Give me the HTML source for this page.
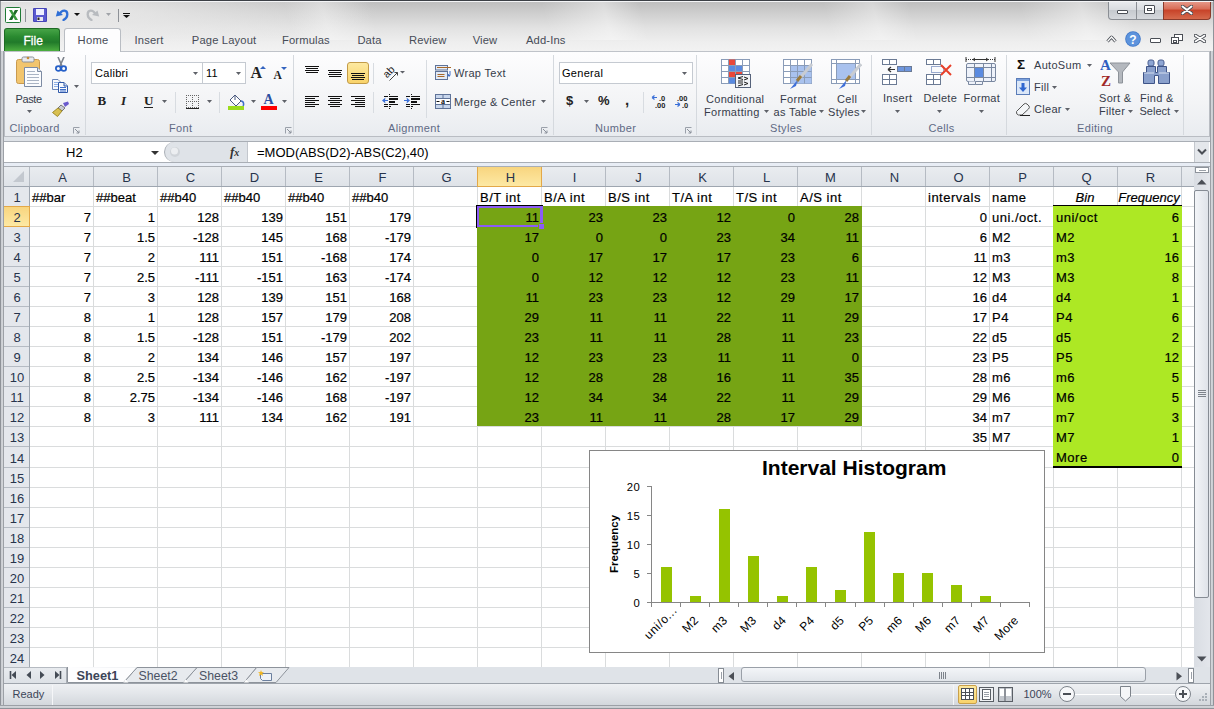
<!DOCTYPE html><html><head><meta charset='utf-8'><style>
*{box-sizing:border-box}
html,body{margin:0;padding:0}
body{width:1214px;height:709px;overflow:hidden;position:relative;background:#fff;font-family:"Liberation Sans", sans-serif;}
.a{position:absolute}
.t{position:absolute;white-space:nowrap;line-height:1}
.c{position:absolute;white-space:nowrap;font-size:13px;line-height:20px;height:20px;color:#000;-webkit-text-stroke:0.2px #000;}
.r{text-align:right}
.gl{position:absolute;font-size:11px;letter-spacing:0.35px;color:#5f6a85;line-height:1;white-space:nowrap}
</style></head><body><div class="a" style="left:0;top:0;width:1214px;height:167px;background:linear-gradient(#bdbdbd 1px,#cdcdcd 12px,#e2e2e2 28px,#eeeeee 42px,#f2f2f2 51px,#dfe3e8 51px,#dfe3e8 167px)"></div>
<div class="a" style="left:0;top:0;width:1214px;height:51px;background:radial-gradient(ellipse 320px 40px at 60px 10px,rgba(240,240,240,0.85),rgba(240,240,240,0) 100%)"></div>
<div class="a" style="left:0;top:0;width:1214px;height:40px;background:linear-gradient(75deg,rgba(255,255,255,0) 24%,rgba(255,255,255,0.35) 27%,rgba(255,255,255,0) 31%,rgba(255,255,255,0) 45%,rgba(255,255,255,0.4) 50%,rgba(255,255,255,0) 53%,rgba(255,255,255,0) 68%,rgba(255,255,255,0.35) 72%,rgba(255,255,255,0) 75%,rgba(255,255,255,0) 84%,rgba(255,255,255,0.4) 89%,rgba(255,255,255,0) 93%)"></div>
<div class="a" style="left:0;top:0;width:1214px;height:1px;background:#474b50"></div>
<div class="a" style="left:0;top:0;width:1px;height:709px;background:#6d7177"></div>
<div class="a" style="left:1213px;top:0;width:1px;height:709px;background:#6d7177"></div>
<div class="a" style="left:4px;top:51px;width:1206px;height:86px;background:linear-gradient(#fdfdfe,#f3f4f6 60%,#e9ecf0);border:1px solid #b9bdc3;border-top-color:#bfc3c9"></div>
<div class="a" style="left:64px;top:28px;width:57px;height:24px;background:#fdfdfe;border:1px solid #b9bdc3;border-bottom:none;border-radius:3px 3px 0 0"></div>
<div class="t" style="left:77.5px;top:34.5px;font-size:11.2px;letter-spacing:0.3px;color:#474c57">Home</div>
<div class="a" style="left:4px;top:28px;width:56px;height:23px;background:linear-gradient(#47a447,#2a8a30 35%,#217a2a 60%,#4cae3f);border-radius:3px 3px 0 0;border:1px solid #1e6b25;border-bottom:none"></div>
<div class="t" style="left:23.5px;top:34.5px;font-size:12px;color:#fff;-webkit-text-stroke:0.3px #fff">File</div>
<div class="t" style="left:134.6px;top:34.5px;font-size:11.2px;letter-spacing:0.15px;color:#474c57">Insert</div>
<div class="t" style="left:191.8px;top:34.5px;font-size:11.2px;letter-spacing:0.15px;color:#474c57">Page Layout</div>
<div class="t" style="left:282px;top:34.5px;font-size:11.2px;letter-spacing:0.15px;color:#474c57">Formulas</div>
<div class="t" style="left:357.4px;top:34.5px;font-size:11.2px;letter-spacing:0.15px;color:#474c57">Data</div>
<div class="t" style="left:409px;top:34.5px;font-size:11.2px;letter-spacing:0.15px;color:#474c57">Review</div>
<div class="t" style="left:472.7px;top:34.5px;font-size:11.2px;letter-spacing:0.15px;color:#474c57">View</div>
<div class="t" style="left:526px;top:34.5px;font-size:11.2px;letter-spacing:0.15px;color:#474c57">Add-Ins</div>
<div class="a" style="left:85px;top:55px;width:1px;height:80px;background:#d5d9de"></div>
<div class="a" style="left:293px;top:55px;width:1px;height:80px;background:#d5d9de"></div>
<div class="a" style="left:553px;top:55px;width:1px;height:80px;background:#d5d9de"></div>
<div class="a" style="left:696px;top:55px;width:1px;height:80px;background:#d5d9de"></div>
<div class="a" style="left:871px;top:55px;width:1px;height:80px;background:#d5d9de"></div>
<div class="a" style="left:1006px;top:55px;width:1px;height:80px;background:#d5d9de"></div>
<div class="a" style="left:1183px;top:55px;width:1px;height:80px;background:#d5d9de"></div>
<div class="gl" style="left:9.5px;top:123.2px">Clipboard</div>
<div class="gl" style="left:169px;top:123.2px">Font</div>
<div class="gl" style="left:388px;top:123.2px">Alignment</div>
<div class="gl" style="left:595px;top:123.2px">Number</div>
<div class="gl" style="left:770px;top:123.2px">Styles</div>
<div class="gl" style="left:928.5px;top:123.2px">Cells</div>
<div class="gl" style="left:1077px;top:123.2px">Editing</div>
<svg class="a" style="left:5px;top:7px;" width="17" height="17" viewBox="0 0 17 17"><rect x="0.5" y="0.5" width="15" height="15" rx="1" fill="#fff" stroke="#1f7a36"/><path d="M4 3h3l1.5 3 1.5-3h3l-3 5 3 5h-3L8.5 10 7 13H4l3-5z" fill="#3a9a3c"/><path d="M8.5 6L10 3h3l-3 5z" fill="#236b2b"/><path d="M4 13l3-5 1.5 2L7 13z" fill="#1d6b2a"/></svg>
<div class="a" style="left:25px;top:9px;width:1px;height:13px;background:#8d9197"></div>
<svg class="a" style="left:33px;top:8px;" width="14" height="14" viewBox="0 0 14 14"><rect x="0" y="0" width="14" height="14" rx="1" fill="#4646b8"/><rect x="1" y="1" width="12" height="12" fill="#5a5ad0"/><rect x="3" y="1" width="8" height="6" fill="#eef0ff"/><rect x="4" y="9" width="6" height="4" fill="#e8e8f0"/><rect x="4.5" y="9.5" width="2" height="2.5" fill="#222"/></svg>
<svg class="a" style="left:55px;top:7px;" width="14" height="14" viewBox="0 0 14 14"><path d="M5 6.5 C7 2.5 12.5 2.5 12.3 7.5 C12.2 10.5 10.5 12 8.5 13" fill="none" stroke="#2f6fd6" stroke-width="2.3" stroke-linecap="round"/><path d="M0.8 9.5 L2.5 3.5 L8 8z" fill="#2f6fd6"/></svg>
<svg class="a" style="left:73.5px;top:13px;" width="6" height="3" viewBox="0 0 6 3"><path d="M0 0H6L3.0 3Z" fill="#111"/></svg>
<svg class="a" style="left:86px;top:7px;" width="14" height="14" viewBox="0 0 14 14"><path d="M9 6.5 C7 2.5 1.5 2.5 1.7 7.5 C1.8 10.5 3.5 12 5.5 13" fill="none" stroke="#b8bbbf" stroke-width="2.3" stroke-linecap="round"/><path d="M13.2 9.5 L11.5 3.5 L6 8z" fill="#b8bbbf"/></svg>
<svg class="a" style="left:106px;top:13px;" width="5" height="3" viewBox="0 0 5 3"><path d="M0 0H5L2.5 3Z" fill="#a0a3a8"/></svg>
<div class="a" style="left:118px;top:9px;width:1px;height:13px;background:#8d9197"></div>
<div class="a" style="left:123px;top:13px;width:7px;height:1px;background:#111"></div>
<svg class="a" style="left:123px;top:15px;" width="7" height="3" viewBox="0 0 7 3"><path d="M0 0H7L3.5 3Z" fill="#111"/></svg>
<div class="a" style="left:1108px;top:0px;width:56px;height:20px;background:linear-gradient(#eceef1,#d9dce0 50%,#c5c9ce 52%,#d5d8dc);border:1px solid #8a8e94;border-top:none;border-radius:0 0 0 4px"></div>
<div class="a" style="left:1136px;top:0px;width:1px;height:19px;background:#8a8e94"></div>
<div class="a" style="left:1163px;top:0px;width:48px;height:20px;background:linear-gradient(#e9a496,#d9705a 45%,#c8442a 55%,#d56a4c);border:1px solid #8a3a2a;border-top:none;border-radius:0 0 4px 0"></div>
<div class="a" style="left:1117px;top:10px;width:11px;height:4px;border:1px solid #4a4e55;background:#fff;border-radius:1px"></div>
<div class="a" style="left:1144px;top:5px;width:11px;height:9px;border:1px solid #4a4e55;background:#fff;border-radius:1px"><div style="position:absolute;left:2px;top:2px;width:5px;height:3px;border:1px solid #4a4e55"></div></div>
<svg class="a" style="left:1181px;top:5px;" width="12" height="10" viewBox="0 0 12 10"><path d="M1.5 1.5 L10.5 8.5 M10.5 1.5 L1.5 8.5" stroke="#4a4e55" stroke-width="3.6" stroke-linecap="round"/><path d="M1.5 1.5 L10.5 8.5 M10.5 1.5 L1.5 8.5" stroke="#fff" stroke-width="2" stroke-linecap="round"/></svg>
<svg class="a" style="left:1106px;top:35px;" width="11" height="8" viewBox="0 0 11 8"><path d="M1.5 6.5 L5.5 2 L9.5 6.5" fill="none" stroke="#4a4e55" stroke-width="3" stroke-linejoin="round"/><path d="M1.5 6.5 L5.5 2 L9.5 6.5" fill="none" stroke="#fff" stroke-width="1.2"/></svg>
<svg class="a" style="left:1125px;top:31px;" width="16" height="16" viewBox="0 0 16 16"><circle cx="8" cy="8" r="7.8" fill="#3f77c8"/><circle cx="8" cy="8" r="7" fill="#5d93dc"/><text x="8" y="12.6" font-family="Liberation Sans" font-weight="bold" font-size="12" fill="#fff" text-anchor="middle">?</text></svg>
<div class="a" style="left:1150px;top:38px;width:11px;height:5px;border:1px solid #4a4e55;background:#fff;border-radius:1px"></div>
<div class="a" style="left:1174px;top:34px;width:9px;height:7px;border:1px solid #4a4e55;background:#fff"></div>
<div class="a" style="left:1171px;top:37px;width:8px;height:7px;border:1px solid #4a4e55;background:#fff"><div style="position:absolute;left:1px;top:2px;width:4px;height:3px;border:1px solid #4a4e55"></div></div>
<svg class="a" style="left:1194px;top:34px;" width="12" height="9" viewBox="0 0 12 9"><path d="M1.5 1.5 L10.5 7.5 M10.5 1.5 L1.5 7.5" stroke="#4a4e55" stroke-width="3.4" stroke-linecap="round"/><path d="M1.5 1.5 L10.5 7.5 M10.5 1.5 L1.5 7.5" stroke="#fff" stroke-width="1.6" stroke-linecap="round"/></svg>
<svg class="a" style="left:15px;top:56px;" width="28" height="32" viewBox="0 0 28 32"><rect x="1.5" y="3.5" width="23" height="24" rx="2" fill="#f2c56e" stroke="#c99a4f"/><rect x="7" y="1" width="12" height="5" rx="1.5" fill="#e8eaee" stroke="#8b9099"/><circle cx="13" cy="2" r="1.3" fill="#c58b3a"/><path d="M9.5 11.5 H22.5 L26.5 15.5 V30.5 H9.5Z" fill="#fbfcfe" stroke="#7d8ba3"/><path d="M22.5 11.5V15.5H26.5" fill="#dfe6f0" stroke="#7d8ba3"/><path d="M12 15.5H20M12 18.5H24M12 21.5H24M12 24.5H24M12 27.5H24" stroke="#aab4c4"/></svg>
<div class="t" style="left:15.5px;top:93.5px;font-size:11px;color:#363c4a;letter-spacing:0.3px;letter-spacing:-0.4px">Paste</div>
<svg class="a" style="left:27px;top:110px;" width="5" height="3" viewBox="0 0 5 3"><path d="M0 0H5L2.5 3Z" fill="#5e6168"/></svg>
<svg class="a" style="left:55px;top:57px;" width="12" height="15" viewBox="0 0 12 15"><path d="M3 0 L7 9 M9 0 L5 9" stroke="#7d838c" stroke-width="1.6"/><circle cx="3.3" cy="11.5" r="2.4" fill="none" stroke="#2660c8" stroke-width="1.8"/><circle cx="8.7" cy="11.5" r="2.4" fill="none" stroke="#2660c8" stroke-width="1.8"/></svg>
<svg class="a" style="left:52px;top:79px;" width="17" height="14" viewBox="0 0 17 14"><path d="M0.5 0.5H6L9.5 4V10.5H0.5Z" fill="#f7f9fc" stroke="#6a86b8"/><path d="M2 3.5H6M2 5.5H8M2 7.5H8" stroke="#8fb0e6"/><path d="M6.5 3.5H12L15.5 7V13.5H6.5Z" fill="#f7f9fc" stroke="#2f58a8"/><path d="M12 3.5V7H15.5" fill="#cfdcf2" stroke="#2f58a8"/><path d="M8 8.5H14M8 10.5H14M8 12H14" stroke="#3f6fc9"/></svg>
<svg class="a" style="left:74px;top:85px;" width="5" height="3" viewBox="0 0 5 3"><path d="M0 0H5L2.5 3Z" fill="#5e6168"/></svg>
<svg class="a" style="left:52px;top:101px;" width="18" height="16" viewBox="0 0 18 16"><path d="M11 2 L16 0.5 L17 3 L13 6z" fill="#6a5acd"/><path d="M9 4 L13 7 L10 10 L6 7z" fill="#c9ccd2" stroke="#777"/><path d="M6 7 L10 10 L5.5 15.5 L0.5 11.5z" fill="#d9c050" stroke="#9f8a2a"/></svg>
<svg class="a" style="left:73px;top:127px;" width="7" height="7" viewBox="0 0 7 7"><path d="M0.5 6.5V0.5H6.5" fill="none" stroke="#9aa0aa"/><path d="M2 2L6 6M6 3.5V6H3.5" fill="none" stroke="#8a909a"/></svg>
<div class="a" style="left:91px;top:62px;width:155px;height:22px;background:#fff;border:1px solid #c5cad1"></div>
<div class="a" style="left:202px;top:63px;width:1px;height:20px;background:#c5cad1"></div>
<div class="t" style="left:95px;top:67.9px;font-size:11px;color:#000;letter-spacing:0.3px;">Calibri</div>
<div class="t" style="left:206px;top:67.9px;font-size:11px;color:#000;letter-spacing:0.3px;">11</div>
<svg class="a" style="left:193px;top:72px;" width="5" height="3" viewBox="0 0 5 3"><path d="M0 0H5L2.5 3Z" fill="#5e6168"/></svg>
<svg class="a" style="left:236px;top:72px;" width="5" height="3" viewBox="0 0 5 3"><path d="M0 0H5L2.5 3Z" fill="#5e6168"/></svg>
<div class="t" style="left:250.5px;top:65px;font-size:16px;color:#222;font-family:Liberation Serif;font-weight:bold;">A</div>
<svg class="a" style="left:260px;top:66px;" width="6" height="3" viewBox="0 0 6 3"><path d="M0 3H6L3 0Z" fill="#3464c0"/></svg>
<div class="t" style="left:273.5px;top:70px;font-size:11.5px;color:#222;font-family:Liberation Serif;font-weight:bold;">A</div>
<svg class="a" style="left:281px;top:67px;" width="6" height="3" viewBox="0 0 6 3"><path d="M0 0H6L3 3Z" fill="#3464c0"/></svg>
<div class="t" style="left:97.5px;top:94px;font-size:13px;color:#222;font-family:Liberation Serif;font-weight:bold">B</div>
<div class="t" style="left:121px;top:94px;font-size:13px;color:#222;font-family:Liberation Serif;font-style:italic;font-weight:bold">I</div>
<div class="t" style="left:144px;top:94px;font-size:13px;color:#222;font-family:Liberation Serif;font-weight:bold">U</div>
<div class="a" style="left:144px;top:107px;width:9px;height:1px;background:#222"></div>
<svg class="a" style="left:162px;top:100px;" width="5" height="3" viewBox="0 0 5 3"><path d="M0 0H5L2.5 3Z" fill="#5e6168"/></svg>
<div class="a" style="left:175px;top:92px;width:1px;height:21px;background:#d8dce1"></div>
<svg class="a" style="left:186px;top:95px;" width="13" height="15" viewBox="0 0 13 15"><rect x="0" y="0" width="1" height="1" fill="#666"/><rect x="0" y="2" width="1" height="1" fill="#666"/><rect x="0" y="4" width="1" height="1" fill="#666"/><rect x="0" y="6" width="1" height="1" fill="#666"/><rect x="0" y="8" width="1" height="1" fill="#666"/><rect x="0" y="10" width="1" height="1" fill="#666"/><rect x="0" y="12" width="1" height="1" fill="#666"/><rect x="2" y="0" width="1" height="1" fill="#666"/><rect x="2" y="6" width="1" height="1" fill="#666"/><rect x="2" y="12" width="1" height="1" fill="#666"/><rect x="4" y="0" width="1" height="1" fill="#666"/><rect x="4" y="6" width="1" height="1" fill="#666"/><rect x="4" y="12" width="1" height="1" fill="#666"/><rect x="6" y="0" width="1" height="1" fill="#666"/><rect x="6" y="2" width="1" height="1" fill="#666"/><rect x="6" y="4" width="1" height="1" fill="#666"/><rect x="6" y="6" width="1" height="1" fill="#666"/><rect x="6" y="8" width="1" height="1" fill="#666"/><rect x="6" y="10" width="1" height="1" fill="#666"/><rect x="6" y="12" width="1" height="1" fill="#666"/><rect x="8" y="0" width="1" height="1" fill="#666"/><rect x="8" y="6" width="1" height="1" fill="#666"/><rect x="8" y="12" width="1" height="1" fill="#666"/><rect x="10" y="0" width="1" height="1" fill="#666"/><rect x="10" y="6" width="1" height="1" fill="#666"/><rect x="10" y="12" width="1" height="1" fill="#666"/><rect x="12" y="0" width="1" height="1" fill="#666"/><rect x="12" y="2" width="1" height="1" fill="#666"/><rect x="12" y="4" width="1" height="1" fill="#666"/><rect x="12" y="6" width="1" height="1" fill="#666"/><rect x="12" y="8" width="1" height="1" fill="#666"/><rect x="12" y="10" width="1" height="1" fill="#666"/><rect x="12" y="12" width="1" height="1" fill="#666"/><rect x="0" y="13" width="13" height="1" fill="#222"/></svg>
<svg class="a" style="left:207px;top:100px;" width="5" height="3" viewBox="0 0 5 3"><path d="M0 0H5L2.5 3Z" fill="#5e6168"/></svg>
<div class="a" style="left:219px;top:92px;width:1px;height:21px;background:#d8dce1"></div>
<svg class="a" style="left:228px;top:93px;" width="17" height="17" viewBox="0 0 17 17"><path d="M2 7 L7 2 L13 8 L8 13z" fill="#fff" stroke="#4a5a80"/><path d="M13 8 C16 8 16 12 15 13" fill="none" stroke="#3f6fc9" stroke-width="1.6"/><path d="M7 2V7" stroke="#4a5a80"/><rect x="0" y="13" width="16" height="4" fill="#9cdc1c"/></svg>
<svg class="a" style="left:250.5px;top:100px;" width="5" height="3" viewBox="0 0 5 3"><path d="M0 0H5L2.5 3Z" fill="#5e6168"/></svg>
<div class="t" style="left:263.5px;top:93px;font-size:14px;color:#2a4ea0;font-family:Liberation Serif;font-weight:bold">A</div>
<div class="a" style="left:261px;top:106px;width:16px;height:4px;background:#f00"></div>
<svg class="a" style="left:282px;top:100px;" width="5" height="3" viewBox="0 0 5 3"><path d="M0 0H5L2.5 3Z" fill="#5e6168"/></svg>
<svg class="a" style="left:285px;top:127px;" width="7" height="7" viewBox="0 0 7 7"><path d="M0.5 6.5V0.5H6.5" fill="none" stroke="#9aa0aa"/><path d="M2 2L6 6M6 3.5V6H3.5" fill="none" stroke="#8a909a"/></svg>
<div class="a" style="left:305px;top:66px;width:14px;height:1px;background:#111"></div><div class="a" style="left:306px;top:68px;width:12px;height:1px;background:#111"></div><div class="a" style="left:305px;top:70px;width:14px;height:1px;background:#111"></div><div class="a" style="left:306px;top:72px;width:12px;height:1px;background:#111"></div>
<div class="a" style="left:328px;top:70px;width:14px;height:1px;background:#111"></div><div class="a" style="left:329px;top:72px;width:12px;height:1px;background:#111"></div><div class="a" style="left:328px;top:74px;width:14px;height:1px;background:#111"></div><div class="a" style="left:329px;top:76px;width:12px;height:1px;background:#111"></div>
<div class="a" style="left:347px;top:62px;width:22px;height:22px;border:1px solid #c29b48;border-radius:3px;background:linear-gradient(#fde9a0,#f9d36a)"></div>
<div class="a" style="left:351px;top:73px;width:14px;height:1px;background:#111"></div><div class="a" style="left:352px;top:75px;width:12px;height:1px;background:#111"></div><div class="a" style="left:351px;top:77px;width:14px;height:1px;background:#111"></div><div class="a" style="left:352px;top:79px;width:12px;height:1px;background:#111"></div>
<div class="a" style="left:373px;top:63px;width:1px;height:21px;background:#d8dce1"></div>
<svg class="a" style="left:383px;top:65px;" width="22" height="16" viewBox="0 0 22 16"><text x="0" y="0" font-family="Liberation Sans" font-size="10.5" fill="#222" transform="translate(4,13.5) rotate(-45)">ab</text><path d="M6.5 15.5 L14.5 7.5" stroke="#444"/><path d="M11.5 7.5H14.5V10.5" fill="none" stroke="#444"/><path d="M17 6H22L19.5 8.5Z" fill="#5e6168"/></svg>
<div class="a" style="left:305px;top:96px;width:14px;height:1px;background:#111"></div><div class="a" style="left:305px;top:98px;width:10px;height:1px;background:#111"></div><div class="a" style="left:305px;top:100px;width:14px;height:1px;background:#111"></div><div class="a" style="left:305px;top:102px;width:10px;height:1px;background:#111"></div><div class="a" style="left:305px;top:104px;width:14px;height:1px;background:#111"></div><div class="a" style="left:305px;top:106px;width:10px;height:1px;background:#111"></div>
<div class="a" style="left:328px;top:96px;width:14px;height:1px;background:#111"></div><div class="a" style="left:330px;top:98px;width:10px;height:1px;background:#111"></div><div class="a" style="left:328px;top:100px;width:14px;height:1px;background:#111"></div><div class="a" style="left:330px;top:102px;width:10px;height:1px;background:#111"></div><div class="a" style="left:328px;top:104px;width:14px;height:1px;background:#111"></div><div class="a" style="left:330px;top:106px;width:10px;height:1px;background:#111"></div>
<div class="a" style="left:351px;top:96px;width:14px;height:1px;background:#111"></div><div class="a" style="left:355px;top:98px;width:10px;height:1px;background:#111"></div><div class="a" style="left:351px;top:100px;width:14px;height:1px;background:#111"></div><div class="a" style="left:355px;top:102px;width:10px;height:1px;background:#111"></div><div class="a" style="left:351px;top:104px;width:14px;height:1px;background:#111"></div><div class="a" style="left:355px;top:106px;width:10px;height:1px;background:#111"></div>
<div class="a" style="left:373px;top:92px;width:1px;height:21px;background:#d8dce1"></div>
<svg class="a" style="left:382px;top:94px;" width="17" height="15" viewBox="0 0 17 15"><rect x="7" y="0" width="1" height="1" fill="#111"/><rect x="7" y="14" width="1" height="1" fill="#111"/><rect x="2" y="2" width="4" height="1" fill="#111"/><rect x="2" y="10" width="4" height="1" fill="#111"/><rect x="2" y="12" width="4" height="1" fill="#111"/><rect x="7" y="2" width="9" height="1" fill="#111"/><rect x="7" y="4" width="9" height="2" fill="#111"/><rect x="7" y="7" width="6" height="2" fill="#111"/><rect x="7" y="10" width="9" height="1" fill="#111"/><rect x="7" y="12" width="2" height="1" fill="#111"/><path d="M0 6.5L3.5 3.5L3 6H6V7H3L3.5 9.5Z" fill="#3a6fd8"/></svg>
<svg class="a" style="left:404px;top:94px;" width="17" height="15" viewBox="0 0 17 15"><rect x="7" y="0" width="1" height="1" fill="#111"/><rect x="7" y="14" width="1" height="1" fill="#111"/><rect x="2" y="2" width="4" height="1" fill="#111"/><rect x="2" y="10" width="4" height="1" fill="#111"/><rect x="2" y="12" width="4" height="1" fill="#111"/><rect x="7" y="2" width="9" height="1" fill="#111"/><rect x="7" y="4" width="9" height="2" fill="#111"/><rect x="7" y="7" width="6" height="2" fill="#111"/><rect x="7" y="10" width="9" height="1" fill="#111"/><rect x="7" y="12" width="2" height="1" fill="#111"/><path d="M6 6.5L2.5 3.5L3 6H0V7H3L2.5 9.5Z" fill="#3a6fd8"/></svg>
<div class="a" style="left:426px;top:60px;width:1px;height:58px;background:#d8dce1"></div>
<svg class="a" style="left:435px;top:64px;" width="17" height="17" viewBox="0 0 17 17"><rect x="0.5" y="1.5" width="12" height="4.5" fill="#e4ebf6" stroke="#5f7398"/><path d="M2 3.5H16" stroke="#a8692a"/><rect x="0.5" y="7.5" width="12" height="8" fill="#e4ebf6" stroke="#5f7398"/><path d="M2.5 10.5H9.5M2.5 12.5H9.5" stroke="#a8692a"/><path d="M15 7V11.5H13M13.5 10L13 11.5L14.5 12.5" fill="none" stroke="#3f6fc9"/></svg>
<div class="t" style="left:454px;top:67.9px;font-size:11px;color:#363c4a;letter-spacing:0.3px;">Wrap Text</div>
<svg class="a" style="left:435px;top:94px;" width="16" height="15" viewBox="0 0 16 15"><rect x="0.5" y="0.5" width="15" height="14" fill="#c8d6ec" stroke="#5f7398"/><rect x="1" y="4.5" width="14" height="6" fill="#fff"/><path d="M0.5 4.5H15.5M0.5 10.5H15.5M8 0.5V4.5M8 10.5V14.5" stroke="#5f7398"/><text x="8" y="10" font-family="Liberation Serif" font-weight="bold" font-size="8" text-anchor="middle" fill="#111">a</text><path d="M1.5 7.5H4.5M11.5 7.5H14.5" stroke="#111"/></svg>
<div class="t" style="left:454px;top:96.9px;font-size:11px;color:#363c4a;letter-spacing:0.3px;">Merge &amp; Center</div>
<svg class="a" style="left:541px;top:100px;" width="5" height="3" viewBox="0 0 5 3"><path d="M0 0H5L2.5 3Z" fill="#5e6168"/></svg>
<svg class="a" style="left:541px;top:127px;" width="7" height="7" viewBox="0 0 7 7"><path d="M0.5 6.5V0.5H6.5" fill="none" stroke="#9aa0aa"/><path d="M2 2L6 6M6 3.5V6H3.5" fill="none" stroke="#8a909a"/></svg>
<div class="a" style="left:559px;top:62px;width:134px;height:22px;background:#fff;border:1px solid #c5cad1"></div>
<div class="t" style="left:562px;top:67.9px;font-size:11px;color:#000;letter-spacing:0.3px;">General</div>
<svg class="a" style="left:682px;top:72px;" width="5" height="3" viewBox="0 0 5 3"><path d="M0 0H5L2.5 3Z" fill="#5e6168"/></svg>
<div class="t" style="left:566px;top:94px;font-size:13px;color:#222;font-weight:bold">$</div>
<svg class="a" style="left:584px;top:100px;" width="5" height="3" viewBox="0 0 5 3"><path d="M0 0H5L2.5 3Z" fill="#5e6168"/></svg>
<div class="t" style="left:598px;top:94px;font-size:13px;color:#222;font-weight:bold">%</div>
<div class="t" style="left:625px;top:92px;font-size:15px;color:#222;font-weight:bold">,</div>
<div class="a" style="left:643px;top:92px;width:1px;height:21px;background:#d8dce1"></div>
<svg class="a" style="left:651px;top:94px;" width="17" height="15" viewBox="0 0 17 15"><path d="M1 3.5H6M1 3.5L3.5 1.5M1 3.5L3.5 5.5" fill="none" stroke="#3a6fd8" stroke-width="1.2"/><text x="8" y="7" font-family="Liberation Sans" font-weight="bold" font-size="7.5" fill="#222">.0</text><text x="4" y="14" font-family="Liberation Sans" font-weight="bold" font-size="7.5" fill="#222">.00</text></svg>
<svg class="a" style="left:674px;top:94px;" width="17" height="15" viewBox="0 0 17 15"><path d="M1 10.5H6M6 10.5L3.5 8.5M6 10.5L3.5 12.5" fill="none" stroke="#3a6fd8" stroke-width="1.2"/><text x="3" y="7" font-family="Liberation Sans" font-weight="bold" font-size="7.5" fill="#222">.00</text><text x="8" y="14" font-family="Liberation Sans" font-weight="bold" font-size="7.5" fill="#222">.0</text></svg>
<svg class="a" style="left:685px;top:127px;" width="7" height="7" viewBox="0 0 7 7"><path d="M0.5 6.5V0.5H6.5" fill="none" stroke="#9aa0aa"/><path d="M2 2L6 6M6 3.5V6H3.5" fill="none" stroke="#8a909a"/></svg>
<svg class="a" style="left:721px;top:59px;" width="32" height="30" viewBox="0 0 32 30"><rect x="0.5" y="0.5" width="28" height="24" fill="#fff" stroke="#8a9cb8"/><rect x="7.5" y="0.5" width="7" height="6" fill="#e8483a"/><rect x="7.5" y="6.5" width="14" height="6" fill="#5a8ae0"/><rect x="7.5" y="12.5" width="14" height="6" fill="#e8483a"/><rect x="7.5" y="18.5" width="7" height="6" fill="#5a8ae0"/><path d="M7.5 0.5V24.5M0.5 6.5H28.5" stroke="#8a9cb8"/><path d="M14.5 0.5V24.5M0.5 12.5H28.5" stroke="#8a9cb8"/><path d="M21.5 0.5V24.5M0.5 18.5H28.5" stroke="#8a9cb8"/><rect x="14.5" y="15.5" width="15" height="13" fill="#f2f4f8" stroke="#56627a"/><path d="M17 19L22 17.5M17 19L22 20.5M17 22H22M17 24H22M17 27L22 25.5" stroke="#222" fill="none"/><path d="M23 18L27 19.5L23 21M23 23L27 24.5L23 26" stroke="#222" fill="none"/></svg>
<div class="t" style="left:706px;top:93.9px;font-size:11px;color:#363c4a;letter-spacing:0.3px;">Conditional</div>
<div class="t" style="left:704px;top:106.9px;font-size:11px;color:#363c4a;letter-spacing:0.3px;">Formatting</div>
<svg class="a" style="left:764px;top:110px;" width="5" height="3" viewBox="0 0 5 3"><path d="M0 0H5L2.5 3Z" fill="#5e6168"/></svg>
<svg class="a" style="left:783px;top:59px;" width="31" height="31" viewBox="0 0 31 31"><rect x="0.5" y="0.5" width="28" height="24" fill="#fff" stroke="#8a9cb8"/><rect x="7.5" y="6.5" width="21" height="18" fill="#a9c2ee"/><path d="M7.5 0.5V24.5M0.5 6.5H28.5" stroke="#8a9cb8"/><path d="M14.5 0.5V24.5M0.5 12.5H28.5" stroke="#8a9cb8"/><path d="M21.5 0.5V24.5M0.5 18.5H28.5" stroke="#8a9cb8"/><path d="M29 5 L17 19" stroke="#c8ccd2" stroke-width="3"/><path d="M18 17 L14 22" stroke="#9a7a3a" stroke-width="3"/><path d="M14.5 21 L7 30 L13 27z" fill="#3f6fd8"/></svg>
<div class="t" style="left:780px;top:93.9px;font-size:11px;color:#363c4a;letter-spacing:0.3px;">Format</div>
<div class="t" style="left:773.5px;top:106.9px;font-size:11px;color:#363c4a;letter-spacing:0.3px;">as Table</div>
<svg class="a" style="left:819px;top:110px;" width="5" height="3" viewBox="0 0 5 3"><path d="M0 0H5L2.5 3Z" fill="#5e6168"/></svg>
<svg class="a" style="left:831px;top:59px;" width="31" height="31" viewBox="0 0 31 31"><rect x="0.5" y="0.5" width="28" height="24" fill="#fff" stroke="#8a9cb8"/><rect x="5.5" y="4.5" width="19" height="16" fill="#a9c2ee" stroke="#8a9cb8"/><path d="M0.5 4.5H28.5M0.5 20.5H28.5M5.5 0.5V24.5M24.5 0.5V24.5" stroke="#8a9cb8"/><path d="M30 5 L18 19" stroke="#c8ccd2" stroke-width="3"/><path d="M19 17 L15 22" stroke="#9a7a3a" stroke-width="3"/><path d="M15.5 21 L8 30 L14 27z" fill="#3f6fd8"/></svg>
<div class="t" style="left:837px;top:93.9px;font-size:11px;color:#363c4a;letter-spacing:0.3px;">Cell</div>
<div class="t" style="left:828px;top:106.9px;font-size:11px;color:#363c4a;letter-spacing:0.3px;">Styles</div>
<svg class="a" style="left:861px;top:110px;" width="5" height="3" viewBox="0 0 5 3"><path d="M0 0H5L2.5 3Z" fill="#5e6168"/></svg>
<svg class="a" style="left:882px;top:58px;" width="32" height="28" viewBox="0 0 32 28"><rect x="0.5" y="1.5" width="14" height="5" fill="#fff" stroke="#6b7a94"/><path d="M7.5 1.5V6.5" stroke="#6b7a94"/><rect x="15.5" y="8.5" width="14" height="5" fill="#6e96de" stroke="#6b7a94"/><path d="M22.5 8.5V13.5" stroke="#6b7a94"/><rect x="0.5" y="16.5" width="14" height="10" fill="#fff" stroke="#6b7a94"/><path d="M7.5 16.5V26.5" stroke="#6b7a94"/><path d="M0.5 21.5H14.5" stroke="#6b7a94"/><path d="M6 11.5H13M6 11.5L9 9M6 11.5L9 14" fill="none" stroke="#333" stroke-width="1.2"/></svg>
<div class="t" style="left:883px;top:92.9px;font-size:11px;color:#363c4a;letter-spacing:0.3px;">Insert</div>
<svg class="a" style="left:895px;top:110px;" width="5" height="3" viewBox="0 0 5 3"><path d="M0 0H5L2.5 3Z" fill="#5e6168"/></svg>
<svg class="a" style="left:926px;top:58px;" width="28" height="28" viewBox="0 0 28 28"><rect x="0.5" y="1.5" width="14" height="5" fill="#fff" stroke="#6b7a94"/><path d="M7.5 1.5V6.5" stroke="#6b7a94"/><rect x="0.5" y="16.5" width="14" height="10" fill="#fff" stroke="#6b7a94"/><path d="M7.5 16.5V26.5" stroke="#6b7a94"/><path d="M0.5 21.5H14.5" stroke="#6b7a94"/><rect x="5.5" y="8.5" width="12" height="6" fill="none" stroke="#3a5aa0" stroke-dasharray="1 1"/><path d="M15 7L25 17M25 7L15 17" stroke="#e8402a" stroke-width="2"/></svg>
<div class="t" style="left:923.5px;top:92.9px;font-size:11px;color:#363c4a;letter-spacing:0.3px;">Delete</div>
<svg class="a" style="left:937px;top:110px;" width="5" height="3" viewBox="0 0 5 3"><path d="M0 0H5L2.5 3Z" fill="#5e6168"/></svg>
<svg class="a" style="left:965px;top:57px;" width="32" height="30" viewBox="0 0 32 30"><path d="M1 2.5H30" stroke="#333" stroke-dasharray="1 1"/><path d="M8 2.5H23M8 2.5L10 1M8 2.5L10 4M23 2.5L21 1M23 2.5L21 4" stroke="#333" fill="none"/><path d="M1 0V5M30 0V5" stroke="#333"/><rect x="1.5" y="6.5" width="29" height="18" rx="1.5" fill="#eef2fa" stroke="#7a88a0"/><path d="M9.5 6.5V24.5M18.5 6.5V24.5M26.5 6.5V24.5M1.5 10.5H30.5M1.5 20.5H30.5" stroke="#7a88a0"/><rect x="10" y="11" width="8" height="9" fill="#5a8ae0"/><path d="M3.5 24.5V27.5H10.5V24.5M10.5 27.5H17.5V24.5" fill="#eef2fa" stroke="#7a88a0"/></svg>
<div class="t" style="left:963.5px;top:92.9px;font-size:11px;color:#363c4a;letter-spacing:0.3px;">Format</div>
<svg class="a" style="left:979px;top:110px;" width="5" height="3" viewBox="0 0 5 3"><path d="M0 0H5L2.5 3Z" fill="#5e6168"/></svg>
<div class="t" style="left:1017px;top:58px;font-size:13.5px;color:#111;font-weight:bold">Σ</div>
<div class="t" style="left:1034px;top:59.9px;font-size:11px;color:#363c4a;letter-spacing:0.3px;">AutoSum</div>
<svg class="a" style="left:1087px;top:64px;" width="5" height="3" viewBox="0 0 5 3"><path d="M0 0H5L2.5 3Z" fill="#5e6168"/></svg>
<svg class="a" style="left:1016px;top:78px;" width="14" height="17" viewBox="0 0 14 17"><rect x="0.5" y="0.5" width="13" height="16" fill="#dbe7f8" stroke="#5a7cb8"/><rect x="1" y="1" width="12" height="2" fill="#7aa0dc"/><path d="M7 5V11" stroke="#2f66d0" stroke-width="3"/><path d="M3 9.5H11L7 14Z" fill="#2f66d0"/></svg>
<div class="t" style="left:1034px;top:81.9px;font-size:11px;color:#363c4a;letter-spacing:0.3px;">Fill</div>
<svg class="a" style="left:1052px;top:86px;" width="5" height="3" viewBox="0 0 5 3"><path d="M0 0H5L2.5 3Z" fill="#5e6168"/></svg>
<svg class="a" style="left:1015px;top:102px;" width="16" height="14" viewBox="0 0 16 14"><path d="M1.5 9.5 L9 2 Q10.5 0.8 12 2 L14 4 Q15 5.5 13.5 7 L7 13 H3.5 Q1 12.5 1.5 9.5z" fill="#f4f6f8" stroke="#555"/><path d="M5 13.5H15" stroke="#222"/></svg>
<div class="t" style="left:1034px;top:103.9px;font-size:11px;color:#363c4a;letter-spacing:0.3px;">Clear</div>
<svg class="a" style="left:1065px;top:108px;" width="5" height="3" viewBox="0 0 5 3"><path d="M0 0H5L2.5 3Z" fill="#5e6168"/></svg>
<svg class="a" style="left:1100px;top:57px;" width="31" height="30" viewBox="0 0 31 30"><text x="0" y="13" font-family="Liberation Serif" font-weight="bold" font-size="15" fill="#2f5fc0">A</text><text x="1" y="29" font-family="Liberation Serif" font-weight="bold" font-size="15" fill="#a02828">Z</text><path d="M10 6 H30 L22.5 15 V26 L18.5 26 V15Z" fill="#b4b8be" stroke="#8d9299"/></svg>
<div class="t" style="left:1099px;top:92.9px;font-size:11px;color:#363c4a;letter-spacing:0.3px;">Sort &amp;</div>
<div class="t" style="left:1099px;top:105.9px;font-size:11px;color:#363c4a;letter-spacing:0.3px;">Filter</div>
<svg class="a" style="left:1128px;top:110px;" width="5" height="3" viewBox="0 0 5 3"><path d="M0 0H5L2.5 3Z" fill="#5e6168"/></svg>
<svg class="a" style="left:1142px;top:58px;" width="29" height="28" viewBox="0 0 29 28"><rect x="6" y="2" width="6" height="6" rx="2" fill="#8ea6d4" stroke="#4a5f90"/><rect x="16" y="2" width="6" height="6" rx="2" fill="#8ea6d4" stroke="#4a5f90"/><path d="M4.5 8.5H13.5V14.5H15.5V8.5H24.5V14.5H27.5V25.5H16.5V17.5H12.5V25.5H1.5V14.5H4.5Z" fill="#8aa0cc" stroke="#3f5488"/><path d="M2 15H12M17 15H27" stroke="#d5deef"/></svg>
<div class="t" style="left:1140px;top:92.9px;font-size:11px;color:#363c4a;letter-spacing:0.3px;">Find &amp;</div>
<div class="t" style="left:1139.5px;top:105.9px;font-size:11px;color:#363c4a;letter-spacing:0.3px;letter-spacing:0">Select</div>
<svg class="a" style="left:1173.5px;top:110px;" width="5" height="3" viewBox="0 0 5 3"><path d="M0 0H5L2.5 3Z" fill="#5e6168"/></svg>
<div class="a" style="left:4px;top:141px;width:1206px;height:22px;background:#fff;border-top:1px solid #a9aeb5;border-bottom:1px solid #a9aeb5"></div>
<div class="a" style="left:4px;top:163px;width:1206px;height:4px;background:#e8edf5;border-bottom:1px solid #a9aeb5"></div>
<div class="a" style="left:164px;top:142px;width:84px;height:20px;background:#dfe3e8;border-left:1px solid #a9aeb5;border-right:1px solid #c3c7cd;border-radius:10px 0 0 10px"></div>
<div class="t" style="left:66px;top:146px;font-size:13px;color:#000">H2</div>
<div class="a" style="left:151px;top:151px;width:0;height:0;border-left:4px solid transparent;border-right:4px solid transparent;border-top:4px solid #333"></div>
<div class="t" style="left:230px;top:145px;font-size:13px;font-family:Liberation Serif;font-style:italic;font-weight:bold;color:#333">f<span style="font-size:10px">x</span></div>
<div class="t" style="left:257px;top:146px;font-size:13px;color:#000">=MOD(ABS(D2)-ABS(C2),40)</div>
<div class="a" style="left:1194px;top:142px;width:15px;height:20px;background:#e4e7eb;border-left:1px solid #c3c7cd"></div>
<svg class="a" style="left:1197px;top:148px" width="10" height="7"><path d="M1 1.5L5 5.5L9 1.5" fill="none" stroke="#4b4f56" stroke-width="2"/></svg>
<svg class="a" style="left:168px;top:145px" width="14" height="14"><circle cx="7" cy="7" r="5" fill="#d0d4d9"/><circle cx="6.5" cy="6" r="3.5" fill="#eceef1"/></svg>
<div class="a" style="left:4px;top:167px;width:1191px;height:500px;background:#fff"></div>
<div class="a" style="left:4px;top:167px;width:1191px;height:20px;background:linear-gradient(#e9ecf0,#dfe3e8);border-bottom:1px solid #9ea6b0"></div>
<div class="a" style="left:4px;top:187px;width:26px;height:480px;background:#e4e7ec;border-right:1px solid #9ea6b0"></div>
<svg class="a" style="left:4px;top:167px" width="25" height="19"><path d="M20 4V15H9Z" fill="#c3c8cf"/></svg>
<div class="a" style="left:93px;top:187px;width:1px;height:480px;background:#dadcdd"></div>
<div class="a" style="left:93px;top:167px;width:1px;height:19px;background:#b5bbc3"></div>
<div class="a" style="left:157px;top:187px;width:1px;height:480px;background:#dadcdd"></div>
<div class="a" style="left:157px;top:167px;width:1px;height:19px;background:#b5bbc3"></div>
<div class="a" style="left:221px;top:187px;width:1px;height:480px;background:#dadcdd"></div>
<div class="a" style="left:221px;top:167px;width:1px;height:19px;background:#b5bbc3"></div>
<div class="a" style="left:285px;top:187px;width:1px;height:480px;background:#dadcdd"></div>
<div class="a" style="left:285px;top:167px;width:1px;height:19px;background:#b5bbc3"></div>
<div class="a" style="left:349px;top:187px;width:1px;height:480px;background:#dadcdd"></div>
<div class="a" style="left:349px;top:167px;width:1px;height:19px;background:#b5bbc3"></div>
<div class="a" style="left:413px;top:187px;width:1px;height:480px;background:#dadcdd"></div>
<div class="a" style="left:413px;top:167px;width:1px;height:19px;background:#b5bbc3"></div>
<div class="a" style="left:477px;top:187px;width:1px;height:480px;background:#dadcdd"></div>
<div class="a" style="left:477px;top:167px;width:1px;height:19px;background:#b5bbc3"></div>
<div class="a" style="left:541px;top:187px;width:1px;height:480px;background:#dadcdd"></div>
<div class="a" style="left:541px;top:167px;width:1px;height:19px;background:#b5bbc3"></div>
<div class="a" style="left:605px;top:187px;width:1px;height:480px;background:#dadcdd"></div>
<div class="a" style="left:605px;top:167px;width:1px;height:19px;background:#b5bbc3"></div>
<div class="a" style="left:669px;top:187px;width:1px;height:480px;background:#dadcdd"></div>
<div class="a" style="left:669px;top:167px;width:1px;height:19px;background:#b5bbc3"></div>
<div class="a" style="left:733px;top:187px;width:1px;height:480px;background:#dadcdd"></div>
<div class="a" style="left:733px;top:167px;width:1px;height:19px;background:#b5bbc3"></div>
<div class="a" style="left:797px;top:187px;width:1px;height:480px;background:#dadcdd"></div>
<div class="a" style="left:797px;top:167px;width:1px;height:19px;background:#b5bbc3"></div>
<div class="a" style="left:861px;top:187px;width:1px;height:480px;background:#dadcdd"></div>
<div class="a" style="left:861px;top:167px;width:1px;height:19px;background:#b5bbc3"></div>
<div class="a" style="left:925px;top:187px;width:1px;height:480px;background:#dadcdd"></div>
<div class="a" style="left:925px;top:167px;width:1px;height:19px;background:#b5bbc3"></div>
<div class="a" style="left:989px;top:187px;width:1px;height:480px;background:#dadcdd"></div>
<div class="a" style="left:989px;top:167px;width:1px;height:19px;background:#b5bbc3"></div>
<div class="a" style="left:1053px;top:187px;width:1px;height:480px;background:#dadcdd"></div>
<div class="a" style="left:1053px;top:167px;width:1px;height:19px;background:#b5bbc3"></div>
<div class="a" style="left:1117px;top:187px;width:1px;height:480px;background:#dadcdd"></div>
<div class="a" style="left:1117px;top:167px;width:1px;height:19px;background:#b5bbc3"></div>
<div class="a" style="left:1181px;top:187px;width:1px;height:480px;background:#dadcdd"></div>
<div class="a" style="left:1181px;top:167px;width:1px;height:19px;background:#b5bbc3"></div>
<div class="a" style="left:29px;top:167px;width:1px;height:19px;background:#b5bbc3"></div>
<div class="a" style="left:30px;top:206px;width:1165px;height:1px;background:#dadcdd"></div>
<div class="a" style="left:4px;top:206px;width:25px;height:1px;background:#b5bbc3"></div>
<div class="a" style="left:30px;top:226px;width:1165px;height:1px;background:#dadcdd"></div>
<div class="a" style="left:4px;top:226px;width:25px;height:1px;background:#b5bbc3"></div>
<div class="a" style="left:30px;top:246px;width:1165px;height:1px;background:#dadcdd"></div>
<div class="a" style="left:4px;top:246px;width:25px;height:1px;background:#b5bbc3"></div>
<div class="a" style="left:30px;top:266px;width:1165px;height:1px;background:#dadcdd"></div>
<div class="a" style="left:4px;top:266px;width:25px;height:1px;background:#b5bbc3"></div>
<div class="a" style="left:30px;top:286px;width:1165px;height:1px;background:#dadcdd"></div>
<div class="a" style="left:4px;top:286px;width:25px;height:1px;background:#b5bbc3"></div>
<div class="a" style="left:30px;top:306px;width:1165px;height:1px;background:#dadcdd"></div>
<div class="a" style="left:4px;top:306px;width:25px;height:1px;background:#b5bbc3"></div>
<div class="a" style="left:30px;top:326px;width:1165px;height:1px;background:#dadcdd"></div>
<div class="a" style="left:4px;top:326px;width:25px;height:1px;background:#b5bbc3"></div>
<div class="a" style="left:30px;top:346px;width:1165px;height:1px;background:#dadcdd"></div>
<div class="a" style="left:4px;top:346px;width:25px;height:1px;background:#b5bbc3"></div>
<div class="a" style="left:30px;top:366px;width:1165px;height:1px;background:#dadcdd"></div>
<div class="a" style="left:4px;top:366px;width:25px;height:1px;background:#b5bbc3"></div>
<div class="a" style="left:30px;top:386px;width:1165px;height:1px;background:#dadcdd"></div>
<div class="a" style="left:4px;top:386px;width:25px;height:1px;background:#b5bbc3"></div>
<div class="a" style="left:30px;top:406px;width:1165px;height:1px;background:#dadcdd"></div>
<div class="a" style="left:4px;top:406px;width:25px;height:1px;background:#b5bbc3"></div>
<div class="a" style="left:30px;top:426px;width:1165px;height:1px;background:#dadcdd"></div>
<div class="a" style="left:4px;top:426px;width:25px;height:1px;background:#b5bbc3"></div>
<div class="a" style="left:30px;top:446px;width:1165px;height:1px;background:#dadcdd"></div>
<div class="a" style="left:4px;top:446px;width:25px;height:1px;background:#b5bbc3"></div>
<div class="a" style="left:30px;top:467px;width:1165px;height:1px;background:#dadcdd"></div>
<div class="a" style="left:4px;top:467px;width:25px;height:1px;background:#b5bbc3"></div>
<div class="a" style="left:30px;top:487px;width:1165px;height:1px;background:#dadcdd"></div>
<div class="a" style="left:4px;top:487px;width:25px;height:1px;background:#b5bbc3"></div>
<div class="a" style="left:30px;top:507px;width:1165px;height:1px;background:#dadcdd"></div>
<div class="a" style="left:4px;top:507px;width:25px;height:1px;background:#b5bbc3"></div>
<div class="a" style="left:30px;top:527px;width:1165px;height:1px;background:#dadcdd"></div>
<div class="a" style="left:4px;top:527px;width:25px;height:1px;background:#b5bbc3"></div>
<div class="a" style="left:30px;top:547px;width:1165px;height:1px;background:#dadcdd"></div>
<div class="a" style="left:4px;top:547px;width:25px;height:1px;background:#b5bbc3"></div>
<div class="a" style="left:30px;top:567px;width:1165px;height:1px;background:#dadcdd"></div>
<div class="a" style="left:4px;top:567px;width:25px;height:1px;background:#b5bbc3"></div>
<div class="a" style="left:30px;top:587px;width:1165px;height:1px;background:#dadcdd"></div>
<div class="a" style="left:4px;top:587px;width:25px;height:1px;background:#b5bbc3"></div>
<div class="a" style="left:30px;top:607px;width:1165px;height:1px;background:#dadcdd"></div>
<div class="a" style="left:4px;top:607px;width:25px;height:1px;background:#b5bbc3"></div>
<div class="a" style="left:30px;top:627px;width:1165px;height:1px;background:#dadcdd"></div>
<div class="a" style="left:4px;top:627px;width:25px;height:1px;background:#b5bbc3"></div>
<div class="a" style="left:30px;top:647px;width:1165px;height:1px;background:#dadcdd"></div>
<div class="a" style="left:4px;top:647px;width:25px;height:1px;background:#b5bbc3"></div>
<div class="a" style="left:30px;top:667px;width:1165px;height:1px;background:#dadcdd"></div>
<div class="a" style="left:4px;top:667px;width:25px;height:1px;background:#b5bbc3"></div>
<div class="a" style="left:477px;top:167px;width:65px;height:20px;background:linear-gradient(#f8d57f,#fde9a4);border:1px solid #e3a848;border-top:none"></div>
<div class="a" style="left:4px;top:206px;width:26px;height:21px;background:linear-gradient(#f8d57f,#fde9a4);border:1px solid #e3a848;border-left:none"></div>
<div class="t" style="left:30.5px;width:64px;text-align:center;top:171px;font-size:13px;color:#27344c">A</div>
<div class="t" style="left:94.5px;width:64px;text-align:center;top:171px;font-size:13px;color:#27344c">B</div>
<div class="t" style="left:158.5px;width:64px;text-align:center;top:171px;font-size:13px;color:#27344c">C</div>
<div class="t" style="left:222.5px;width:64px;text-align:center;top:171px;font-size:13px;color:#27344c">D</div>
<div class="t" style="left:286.5px;width:64px;text-align:center;top:171px;font-size:13px;color:#27344c">E</div>
<div class="t" style="left:350.5px;width:64px;text-align:center;top:171px;font-size:13px;color:#27344c">F</div>
<div class="t" style="left:414.5px;width:64px;text-align:center;top:171px;font-size:13px;color:#27344c">G</div>
<div class="t" style="left:478.5px;width:64px;text-align:center;top:171px;font-size:13px;color:#27344c">H</div>
<div class="t" style="left:542.5px;width:64px;text-align:center;top:171px;font-size:13px;color:#27344c">I</div>
<div class="t" style="left:606.5px;width:64px;text-align:center;top:171px;font-size:13px;color:#27344c">J</div>
<div class="t" style="left:670.5px;width:64px;text-align:center;top:171px;font-size:13px;color:#27344c">K</div>
<div class="t" style="left:734.5px;width:64px;text-align:center;top:171px;font-size:13px;color:#27344c">L</div>
<div class="t" style="left:798.5px;width:64px;text-align:center;top:171px;font-size:13px;color:#27344c">M</div>
<div class="t" style="left:862.5px;width:64px;text-align:center;top:171px;font-size:13px;color:#27344c">N</div>
<div class="t" style="left:926.5px;width:64px;text-align:center;top:171px;font-size:13px;color:#27344c">O</div>
<div class="t" style="left:990.5px;width:64px;text-align:center;top:171px;font-size:13px;color:#27344c">P</div>
<div class="t" style="left:1054.5px;width:64px;text-align:center;top:171px;font-size:13px;color:#27344c">Q</div>
<div class="t" style="left:1118.5px;width:64px;text-align:center;top:171px;font-size:13px;color:#27344c">R</div>
<div class="t" style="left:4.5px;width:25px;text-align:center;top:191px;font-size:13px;color:#27344c">1</div>
<div class="t" style="left:4.5px;width:25px;text-align:center;top:211px;font-size:13px;color:#27344c">2</div>
<div class="t" style="left:4.5px;width:25px;text-align:center;top:231px;font-size:13px;color:#27344c">3</div>
<div class="t" style="left:4.5px;width:25px;text-align:center;top:251px;font-size:13px;color:#27344c">4</div>
<div class="t" style="left:4.5px;width:25px;text-align:center;top:271px;font-size:13px;color:#27344c">5</div>
<div class="t" style="left:4.5px;width:25px;text-align:center;top:291px;font-size:13px;color:#27344c">6</div>
<div class="t" style="left:4.5px;width:25px;text-align:center;top:311px;font-size:13px;color:#27344c">7</div>
<div class="t" style="left:4.5px;width:25px;text-align:center;top:331px;font-size:13px;color:#27344c">8</div>
<div class="t" style="left:4.5px;width:25px;text-align:center;top:351px;font-size:13px;color:#27344c">9</div>
<div class="t" style="left:4.5px;width:25px;text-align:center;top:371px;font-size:13px;color:#27344c">10</div>
<div class="t" style="left:4.5px;width:25px;text-align:center;top:391px;font-size:13px;color:#27344c">11</div>
<div class="t" style="left:4.5px;width:25px;text-align:center;top:411px;font-size:13px;color:#27344c">12</div>
<div class="t" style="left:4.5px;width:25px;text-align:center;top:431px;font-size:13px;color:#27344c">13</div>
<div class="t" style="left:4.5px;width:25px;text-align:center;top:451.5px;font-size:13px;color:#27344c">14</div>
<div class="t" style="left:4.5px;width:25px;text-align:center;top:472px;font-size:13px;color:#27344c">15</div>
<div class="t" style="left:4.5px;width:25px;text-align:center;top:492px;font-size:13px;color:#27344c">16</div>
<div class="t" style="left:4.5px;width:25px;text-align:center;top:512px;font-size:13px;color:#27344c">17</div>
<div class="t" style="left:4.5px;width:25px;text-align:center;top:532px;font-size:13px;color:#27344c">18</div>
<div class="t" style="left:4.5px;width:25px;text-align:center;top:552px;font-size:13px;color:#27344c">19</div>
<div class="t" style="left:4.5px;width:25px;text-align:center;top:572px;font-size:13px;color:#27344c">20</div>
<div class="t" style="left:4.5px;width:25px;text-align:center;top:592px;font-size:13px;color:#27344c">21</div>
<div class="t" style="left:4.5px;width:25px;text-align:center;top:612px;font-size:13px;color:#27344c">22</div>
<div class="t" style="left:4.5px;width:25px;text-align:center;top:632px;font-size:13px;color:#27344c">23</div>
<div class="t" style="left:4.5px;width:25px;text-align:center;top:652px;font-size:13px;color:#27344c">24</div>
<div class="a" style="left:477px;top:206px;width:385px;height:220px;background:#76a414"></div>
<div class="a" style="left:1053px;top:206px;width:129px;height:260px;background:#ade824"></div>
<div class="a" style="left:1053px;top:205px;width:129px;height:1px;background:#000"></div>
<div class="a" style="left:1053px;top:466px;width:129px;height:2px;background:#000"></div>
<div class="c" style="left:32px;top:188px;letter-spacing:0;">##bar</div>
<div class="c" style="left:96px;top:188px;letter-spacing:0;">##beat</div>
<div class="c" style="left:160px;top:188px;letter-spacing:0;">##b40</div>
<div class="c" style="left:224px;top:188px;letter-spacing:0;">##b40</div>
<div class="c" style="left:288px;top:188px;letter-spacing:0;">##b40</div>
<div class="c" style="left:352px;top:188px;letter-spacing:0;">##b40</div>
<div class="c" style="left:480px;top:188px;letter-spacing:0.5px;">B/T int</div>
<div class="c" style="left:544px;top:188px;letter-spacing:0.5px;">B/A int</div>
<div class="c" style="left:608px;top:188px;letter-spacing:0.5px;">B/S int</div>
<div class="c" style="left:672px;top:188px;letter-spacing:0.5px;">T/A int</div>
<div class="c" style="left:736px;top:188px;letter-spacing:0.5px;">T/S int</div>
<div class="c" style="left:800px;top:188px;letter-spacing:0.5px;">A/S int</div>
<div class="c" style="left:928px;top:188px;letter-spacing:0.5px;">intervals</div>
<div class="c" style="left:992px;top:188px;letter-spacing:0.5px;">name</div>
<div class="c" style="left:1053px;width:64px;text-align:center;top:188px;font-style:italic">Bin</div>
<div class="c" style="left:1117px;width:64px;text-align:center;top:188px;font-style:italic">Frequency</div>
<div class="c r" style="left:29px;width:62px;top:208px;">7</div>
<div class="c r" style="left:93px;width:62px;top:208px;">1</div>
<div class="c r" style="left:157px;width:62px;top:208px;">128</div>
<div class="c r" style="left:221px;width:62px;top:208px;">139</div>
<div class="c r" style="left:285px;width:62px;top:208px;">151</div>
<div class="c r" style="left:349px;width:62px;top:208px;">179</div>
<div class="c r" style="left:477px;width:62px;top:208px;">11</div>
<div class="c r" style="left:541px;width:62px;top:208px;">23</div>
<div class="c r" style="left:605px;width:62px;top:208px;">23</div>
<div class="c r" style="left:669px;width:62px;top:208px;">12</div>
<div class="c r" style="left:733px;width:62px;top:208px;">0</div>
<div class="c r" style="left:797px;width:62px;top:208px;">28</div>
<div class="c r" style="left:29px;width:62px;top:228px;">7</div>
<div class="c r" style="left:93px;width:62px;top:228px;">1.5</div>
<div class="c r" style="left:157px;width:62px;top:228px;">-128</div>
<div class="c r" style="left:221px;width:62px;top:228px;">145</div>
<div class="c r" style="left:285px;width:62px;top:228px;">168</div>
<div class="c r" style="left:349px;width:62px;top:228px;">-179</div>
<div class="c r" style="left:477px;width:62px;top:228px;">17</div>
<div class="c r" style="left:541px;width:62px;top:228px;">0</div>
<div class="c r" style="left:605px;width:62px;top:228px;">0</div>
<div class="c r" style="left:669px;width:62px;top:228px;">23</div>
<div class="c r" style="left:733px;width:62px;top:228px;">34</div>
<div class="c r" style="left:797px;width:62px;top:228px;">11</div>
<div class="c r" style="left:29px;width:62px;top:248px;">7</div>
<div class="c r" style="left:93px;width:62px;top:248px;">2</div>
<div class="c r" style="left:157px;width:62px;top:248px;">111</div>
<div class="c r" style="left:221px;width:62px;top:248px;">151</div>
<div class="c r" style="left:285px;width:62px;top:248px;">-168</div>
<div class="c r" style="left:349px;width:62px;top:248px;">174</div>
<div class="c r" style="left:477px;width:62px;top:248px;">0</div>
<div class="c r" style="left:541px;width:62px;top:248px;">17</div>
<div class="c r" style="left:605px;width:62px;top:248px;">17</div>
<div class="c r" style="left:669px;width:62px;top:248px;">17</div>
<div class="c r" style="left:733px;width:62px;top:248px;">23</div>
<div class="c r" style="left:797px;width:62px;top:248px;">6</div>
<div class="c r" style="left:29px;width:62px;top:268px;">7</div>
<div class="c r" style="left:93px;width:62px;top:268px;">2.5</div>
<div class="c r" style="left:157px;width:62px;top:268px;">-111</div>
<div class="c r" style="left:221px;width:62px;top:268px;">-151</div>
<div class="c r" style="left:285px;width:62px;top:268px;">163</div>
<div class="c r" style="left:349px;width:62px;top:268px;">-174</div>
<div class="c r" style="left:477px;width:62px;top:268px;">0</div>
<div class="c r" style="left:541px;width:62px;top:268px;">12</div>
<div class="c r" style="left:605px;width:62px;top:268px;">12</div>
<div class="c r" style="left:669px;width:62px;top:268px;">12</div>
<div class="c r" style="left:733px;width:62px;top:268px;">23</div>
<div class="c r" style="left:797px;width:62px;top:268px;">11</div>
<div class="c r" style="left:29px;width:62px;top:288px;">7</div>
<div class="c r" style="left:93px;width:62px;top:288px;">3</div>
<div class="c r" style="left:157px;width:62px;top:288px;">128</div>
<div class="c r" style="left:221px;width:62px;top:288px;">139</div>
<div class="c r" style="left:285px;width:62px;top:288px;">151</div>
<div class="c r" style="left:349px;width:62px;top:288px;">168</div>
<div class="c r" style="left:477px;width:62px;top:288px;">11</div>
<div class="c r" style="left:541px;width:62px;top:288px;">23</div>
<div class="c r" style="left:605px;width:62px;top:288px;">23</div>
<div class="c r" style="left:669px;width:62px;top:288px;">12</div>
<div class="c r" style="left:733px;width:62px;top:288px;">29</div>
<div class="c r" style="left:797px;width:62px;top:288px;">17</div>
<div class="c r" style="left:29px;width:62px;top:308px;">8</div>
<div class="c r" style="left:93px;width:62px;top:308px;">1</div>
<div class="c r" style="left:157px;width:62px;top:308px;">128</div>
<div class="c r" style="left:221px;width:62px;top:308px;">157</div>
<div class="c r" style="left:285px;width:62px;top:308px;">179</div>
<div class="c r" style="left:349px;width:62px;top:308px;">208</div>
<div class="c r" style="left:477px;width:62px;top:308px;">29</div>
<div class="c r" style="left:541px;width:62px;top:308px;">11</div>
<div class="c r" style="left:605px;width:62px;top:308px;">11</div>
<div class="c r" style="left:669px;width:62px;top:308px;">22</div>
<div class="c r" style="left:733px;width:62px;top:308px;">11</div>
<div class="c r" style="left:797px;width:62px;top:308px;">29</div>
<div class="c r" style="left:29px;width:62px;top:328px;">8</div>
<div class="c r" style="left:93px;width:62px;top:328px;">1.5</div>
<div class="c r" style="left:157px;width:62px;top:328px;">-128</div>
<div class="c r" style="left:221px;width:62px;top:328px;">151</div>
<div class="c r" style="left:285px;width:62px;top:328px;">-179</div>
<div class="c r" style="left:349px;width:62px;top:328px;">202</div>
<div class="c r" style="left:477px;width:62px;top:328px;">23</div>
<div class="c r" style="left:541px;width:62px;top:328px;">11</div>
<div class="c r" style="left:605px;width:62px;top:328px;">11</div>
<div class="c r" style="left:669px;width:62px;top:328px;">28</div>
<div class="c r" style="left:733px;width:62px;top:328px;">11</div>
<div class="c r" style="left:797px;width:62px;top:328px;">23</div>
<div class="c r" style="left:29px;width:62px;top:348px;">8</div>
<div class="c r" style="left:93px;width:62px;top:348px;">2</div>
<div class="c r" style="left:157px;width:62px;top:348px;">134</div>
<div class="c r" style="left:221px;width:62px;top:348px;">146</div>
<div class="c r" style="left:285px;width:62px;top:348px;">157</div>
<div class="c r" style="left:349px;width:62px;top:348px;">197</div>
<div class="c r" style="left:477px;width:62px;top:348px;">12</div>
<div class="c r" style="left:541px;width:62px;top:348px;">23</div>
<div class="c r" style="left:605px;width:62px;top:348px;">23</div>
<div class="c r" style="left:669px;width:62px;top:348px;">11</div>
<div class="c r" style="left:733px;width:62px;top:348px;">11</div>
<div class="c r" style="left:797px;width:62px;top:348px;">0</div>
<div class="c r" style="left:29px;width:62px;top:368px;">8</div>
<div class="c r" style="left:93px;width:62px;top:368px;">2.5</div>
<div class="c r" style="left:157px;width:62px;top:368px;">-134</div>
<div class="c r" style="left:221px;width:62px;top:368px;">-146</div>
<div class="c r" style="left:285px;width:62px;top:368px;">162</div>
<div class="c r" style="left:349px;width:62px;top:368px;">-197</div>
<div class="c r" style="left:477px;width:62px;top:368px;">12</div>
<div class="c r" style="left:541px;width:62px;top:368px;">28</div>
<div class="c r" style="left:605px;width:62px;top:368px;">28</div>
<div class="c r" style="left:669px;width:62px;top:368px;">16</div>
<div class="c r" style="left:733px;width:62px;top:368px;">11</div>
<div class="c r" style="left:797px;width:62px;top:368px;">35</div>
<div class="c r" style="left:29px;width:62px;top:388px;">8</div>
<div class="c r" style="left:93px;width:62px;top:388px;">2.75</div>
<div class="c r" style="left:157px;width:62px;top:388px;">-134</div>
<div class="c r" style="left:221px;width:62px;top:388px;">-146</div>
<div class="c r" style="left:285px;width:62px;top:388px;">168</div>
<div class="c r" style="left:349px;width:62px;top:388px;">-197</div>
<div class="c r" style="left:477px;width:62px;top:388px;">12</div>
<div class="c r" style="left:541px;width:62px;top:388px;">34</div>
<div class="c r" style="left:605px;width:62px;top:388px;">34</div>
<div class="c r" style="left:669px;width:62px;top:388px;">22</div>
<div class="c r" style="left:733px;width:62px;top:388px;">11</div>
<div class="c r" style="left:797px;width:62px;top:388px;">29</div>
<div class="c r" style="left:29px;width:62px;top:408px;">8</div>
<div class="c r" style="left:93px;width:62px;top:408px;">3</div>
<div class="c r" style="left:157px;width:62px;top:408px;">111</div>
<div class="c r" style="left:221px;width:62px;top:408px;">134</div>
<div class="c r" style="left:285px;width:62px;top:408px;">162</div>
<div class="c r" style="left:349px;width:62px;top:408px;">191</div>
<div class="c r" style="left:477px;width:62px;top:408px;">23</div>
<div class="c r" style="left:541px;width:62px;top:408px;">11</div>
<div class="c r" style="left:605px;width:62px;top:408px;">11</div>
<div class="c r" style="left:669px;width:62px;top:408px;">28</div>
<div class="c r" style="left:733px;width:62px;top:408px;">17</div>
<div class="c r" style="left:797px;width:62px;top:408px;">29</div>
<div class="c r" style="left:925px;width:62px;top:208px;">0</div>
<div class="c" style="left:992px;top:208px;letter-spacing:0.5px;">uni./oct.</div>
<div class="c r" style="left:925px;width:62px;top:228px;">6</div>
<div class="c" style="left:992px;top:228px;letter-spacing:0.5px;">M2</div>
<div class="c r" style="left:925px;width:62px;top:248px;">11</div>
<div class="c" style="left:992px;top:248px;letter-spacing:0.5px;">m3</div>
<div class="c r" style="left:925px;width:62px;top:268px;">12</div>
<div class="c" style="left:992px;top:268px;letter-spacing:0.5px;">M3</div>
<div class="c r" style="left:925px;width:62px;top:288px;">16</div>
<div class="c" style="left:992px;top:288px;letter-spacing:0.5px;">d4</div>
<div class="c r" style="left:925px;width:62px;top:308px;">17</div>
<div class="c" style="left:992px;top:308px;letter-spacing:0.5px;">P4</div>
<div class="c r" style="left:925px;width:62px;top:328px;">22</div>
<div class="c" style="left:992px;top:328px;letter-spacing:0.5px;">d5</div>
<div class="c r" style="left:925px;width:62px;top:348px;">23</div>
<div class="c" style="left:992px;top:348px;letter-spacing:0.5px;">P5</div>
<div class="c r" style="left:925px;width:62px;top:368px;">28</div>
<div class="c" style="left:992px;top:368px;letter-spacing:0.5px;">m6</div>
<div class="c r" style="left:925px;width:62px;top:388px;">29</div>
<div class="c" style="left:992px;top:388px;letter-spacing:0.5px;">M6</div>
<div class="c r" style="left:925px;width:62px;top:408px;">34</div>
<div class="c" style="left:992px;top:408px;letter-spacing:0.5px;">m7</div>
<div class="c r" style="left:925px;width:62px;top:428px;">35</div>
<div class="c" style="left:992px;top:428px;letter-spacing:0.5px;">M7</div>
<div class="c" style="left:1056px;top:208px;letter-spacing:0.5px;">uni/oct</div>
<div class="c r" style="left:1117px;width:62px;top:208px;">6</div>
<div class="c" style="left:1056px;top:228px;letter-spacing:0.5px;">M2</div>
<div class="c r" style="left:1117px;width:62px;top:228px;">1</div>
<div class="c" style="left:1056px;top:248px;letter-spacing:0.5px;">m3</div>
<div class="c r" style="left:1117px;width:62px;top:248px;">16</div>
<div class="c" style="left:1056px;top:268px;letter-spacing:0.5px;">M3</div>
<div class="c r" style="left:1117px;width:62px;top:268px;">8</div>
<div class="c" style="left:1056px;top:288px;letter-spacing:0.5px;">d4</div>
<div class="c r" style="left:1117px;width:62px;top:288px;">1</div>
<div class="c" style="left:1056px;top:308px;letter-spacing:0.5px;">P4</div>
<div class="c r" style="left:1117px;width:62px;top:308px;">6</div>
<div class="c" style="left:1056px;top:328px;letter-spacing:0.5px;">d5</div>
<div class="c r" style="left:1117px;width:62px;top:328px;">2</div>
<div class="c" style="left:1056px;top:348px;letter-spacing:0.5px;">P5</div>
<div class="c r" style="left:1117px;width:62px;top:348px;">12</div>
<div class="c" style="left:1056px;top:368px;letter-spacing:0.5px;">m6</div>
<div class="c r" style="left:1117px;width:62px;top:368px;">5</div>
<div class="c" style="left:1056px;top:388px;letter-spacing:0.5px;">M6</div>
<div class="c r" style="left:1117px;width:62px;top:388px;">5</div>
<div class="c" style="left:1056px;top:408px;letter-spacing:0.5px;">m7</div>
<div class="c r" style="left:1117px;width:62px;top:408px;">3</div>
<div class="c" style="left:1056px;top:428px;letter-spacing:0.5px;">M7</div>
<div class="c r" style="left:1117px;width:62px;top:428px;">1</div>
<div class="c" style="left:1056px;top:448px;letter-spacing:0.5px;">More</div>
<div class="c r" style="left:1117px;width:62px;top:448px;">0</div>
<div class="a" style="left:476px;top:205px;width:67px;height:1px;background:#000"></div>
<div class="a" style="left:476px;top:205px;width:1px;height:23px;background:#000"></div>
<div class="a" style="left:477px;top:206px;width:66px;height:2px;background:#8b5cf6"></div>
<div class="a" style="left:477px;top:206px;width:2px;height:21px;background:#8b5cf6"></div>
<div class="a" style="left:477px;top:225px;width:61px;height:2px;background:#8b5cf6"></div>
<div class="a" style="left:540px;top:206px;width:3px;height:17px;background:#8b5cf6"></div>
<div class="a" style="left:539px;top:224px;width:5px;height:5px;background:#8b5cf6"></div>
<div class="a" style="left:589px;top:450px;width:456px;height:203px;background:#fff;border:1px solid #868686"></div>
<div class="t" style="left:762px;top:457px;font-size:21px;font-weight:bold;color:#000">Interval Histogram</div>
<div class="a" style="left:651px;top:486px;width:1px;height:117px;background:#868686"></div>
<div class="a" style="left:651px;top:602px;width:379px;height:1px;background:#868686"></div>
<div class="a" style="left:647px;top:602px;width:4px;height:1px;background:#868686"></div>
<div class="t" style="left:600px;width:40.5px;text-align:right;top:597.5px;font-size:11.3px;letter-spacing:0.6px;color:#000">0</div>
<div class="a" style="left:647px;top:573px;width:4px;height:1px;background:#868686"></div>
<div class="t" style="left:600px;width:40.5px;text-align:right;top:568.5px;font-size:11.3px;letter-spacing:0.6px;color:#000">5</div>
<div class="a" style="left:647px;top:544px;width:4px;height:1px;background:#868686"></div>
<div class="t" style="left:600px;width:40.5px;text-align:right;top:539.5px;font-size:11.3px;letter-spacing:0.6px;color:#000">10</div>
<div class="a" style="left:647px;top:515px;width:4px;height:1px;background:#868686"></div>
<div class="t" style="left:600px;width:40.5px;text-align:right;top:510.5px;font-size:11.3px;letter-spacing:0.6px;color:#000">15</div>
<div class="a" style="left:647px;top:486px;width:4px;height:1px;background:#868686"></div>
<div class="t" style="left:600px;width:40.5px;text-align:right;top:481.5px;font-size:11.3px;letter-spacing:0.6px;color:#000">20</div>
<div class="a" style="left:651px;top:602px;width:1px;height:5px;background:#868686"></div>
<div class="a" style="left:680px;top:602px;width:1px;height:5px;background:#868686"></div>
<div class="a" style="left:709px;top:602px;width:1px;height:5px;background:#868686"></div>
<div class="a" style="left:738px;top:602px;width:1px;height:5px;background:#868686"></div>
<div class="a" style="left:767px;top:602px;width:1px;height:5px;background:#868686"></div>
<div class="a" style="left:796px;top:602px;width:1px;height:5px;background:#868686"></div>
<div class="a" style="left:825px;top:602px;width:1px;height:5px;background:#868686"></div>
<div class="a" style="left:855px;top:602px;width:1px;height:5px;background:#868686"></div>
<div class="a" style="left:884px;top:602px;width:1px;height:5px;background:#868686"></div>
<div class="a" style="left:913px;top:602px;width:1px;height:5px;background:#868686"></div>
<div class="a" style="left:942px;top:602px;width:1px;height:5px;background:#868686"></div>
<div class="a" style="left:971px;top:602px;width:1px;height:5px;background:#868686"></div>
<div class="a" style="left:1000px;top:602px;width:1px;height:5px;background:#868686"></div>
<div class="a" style="left:1029px;top:602px;width:1px;height:5px;background:#868686"></div>
<div class="a" style="left:661px;top:567px;width:11px;height:35px;background:#95c300"></div>
<div class="t" style="right:543.5px;top:604px;letter-spacing:0.6px;font-size:12px;color:#000;transform-origin:100% 0;transform:rotate(-45deg)">uni/o...</div>
<div class="a" style="left:690px;top:596px;width:11px;height:6px;background:#95c300"></div>
<div class="t" style="right:521.9px;top:614px;letter-spacing:0.2px;font-size:12px;color:#000;transform-origin:100% 0;transform:rotate(-45deg)">M2</div>
<div class="a" style="left:719px;top:509px;width:11px;height:93px;background:#95c300"></div>
<div class="t" style="right:492.8px;top:614px;letter-spacing:0.2px;font-size:12px;color:#000;transform-origin:100% 0;transform:rotate(-45deg)">m3</div>
<div class="a" style="left:748px;top:556px;width:11px;height:46px;background:#95c300"></div>
<div class="t" style="right:463.7px;top:614px;letter-spacing:0.2px;font-size:12px;color:#000;transform-origin:100% 0;transform:rotate(-45deg)">M3</div>
<div class="a" style="left:777px;top:596px;width:11px;height:6px;background:#95c300"></div>
<div class="t" style="right:434.7px;top:614px;letter-spacing:0.2px;font-size:12px;color:#000;transform-origin:100% 0;transform:rotate(-45deg)">d4</div>
<div class="a" style="left:806px;top:567px;width:11px;height:35px;background:#95c300"></div>
<div class="t" style="right:405.6px;top:614px;letter-spacing:0.2px;font-size:12px;color:#000;transform-origin:100% 0;transform:rotate(-45deg)">P4</div>
<div class="a" style="left:835px;top:590px;width:11px;height:12px;background:#95c300"></div>
<div class="t" style="right:376.5px;top:614px;letter-spacing:0.2px;font-size:12px;color:#000;transform-origin:100% 0;transform:rotate(-45deg)">d5</div>
<div class="a" style="left:864px;top:532px;width:11px;height:70px;background:#95c300"></div>
<div class="t" style="right:347.4px;top:614px;letter-spacing:0.2px;font-size:12px;color:#000;transform-origin:100% 0;transform:rotate(-45deg)">P5</div>
<div class="a" style="left:893px;top:573px;width:11px;height:29px;background:#95c300"></div>
<div class="t" style="right:318.3px;top:614px;letter-spacing:0.2px;font-size:12px;color:#000;transform-origin:100% 0;transform:rotate(-45deg)">m6</div>
<div class="a" style="left:922px;top:573px;width:11px;height:29px;background:#95c300"></div>
<div class="t" style="right:289.3px;top:614px;letter-spacing:0.2px;font-size:12px;color:#000;transform-origin:100% 0;transform:rotate(-45deg)">M6</div>
<div class="a" style="left:951px;top:585px;width:11px;height:17px;background:#95c300"></div>
<div class="t" style="right:260.2px;top:614px;letter-spacing:0.2px;font-size:12px;color:#000;transform-origin:100% 0;transform:rotate(-45deg)">m7</div>
<div class="a" style="left:980px;top:596px;width:11px;height:6px;background:#95c300"></div>
<div class="t" style="right:231.1px;top:614px;letter-spacing:0.2px;font-size:12px;color:#000;transform-origin:100% 0;transform:rotate(-45deg)">M7</div>
<div class="t" style="right:202.0px;top:614px;letter-spacing:0.2px;font-size:12px;color:#000;transform-origin:100% 0;transform:rotate(-45deg)">More</div>
<div class="t" style="left:609px;top:573px;font-size:11.5px;font-weight:bold;color:#000;transform-origin:0 0;transform:rotate(-90deg)">Frequency</div>
<div class="a" style="left:1194px;top:167px;width:16px;height:500px;background:linear-gradient(90deg,#d9dde3,#e3e6eb)"></div>
<div class="a" style="left:1195px;top:167px;width:14px;height:6px;background:#fff;border:1px solid #8d939b"><div style="position:absolute;left:3px;top:2px;width:7px;height:1px;background:#9aa0a8"></div></div>
<svg class="a" style="left:1197px;top:179px" width="10" height="6"><path d="M0 5.5L4.75 0.5L9.5 5.5Z" fill="#4b4f56"/></svg>
<div class="a" style="left:1194px;top:190px;width:15px;height:408px;background:linear-gradient(90deg,#f3f5f8,#dfe3e9);border:1px solid #868c94;border-radius:2px"></div>
<div class="a" style="left:1198px;top:390px;width:8px;height:1px;background:#7d838b"></div>
<div class="a" style="left:1198px;top:392px;width:8px;height:1px;background:#7d838b"></div>
<div class="a" style="left:1198px;top:394px;width:8px;height:1px;background:#7d838b"></div>
<div class="a" style="left:1198px;top:396px;width:8px;height:1px;background:#7d838b"></div>
<svg class="a" style="left:1197px;top:656px" width="10" height="6"><path d="M0 0.5L4.75 5.5L9.5 0.5Z" fill="#4b4f56"/></svg>
<div class="a" style="left:4px;top:667px;width:1206px;height:17px;background:#dfe3e8;border-bottom:1px solid #9ea4ac"></div>
<div class="a" style="left:4px;top:667px;width:63px;height:16px;background:linear-gradient(#e8ebef,#dde1e6);border-right:1px solid #a9aeb5;border-top:1px solid #b5bac1"></div>
<svg class="a" style="left:9px;top:671px" width="54" height="8"><path d="M1.5 0V8" stroke="#444b55" stroke-width="1.6"/><path d="M7 0V8L2.5 4Z" fill="#444b55"/><path d="M22 0V8L17.5 4Z" fill="#444b55"/><path d="M31 0V8L35.5 4Z" fill="#444b55"/><path d="M46 0V8L50.5 4Z" fill="#444b55"/><path d="M51.5 0V8" stroke="#444b55" stroke-width="1.6"/></svg>
<svg class="a" style="left:67px;top:667px" width="240" height="17"><path d="M209 15.5 L222 0.5 H176 L189.5 0.5 Z" fill="none"/><path d="M177 15.5 L189.5 0.5 H222 L209 15.5Z" fill="#e7eaee" stroke="#8d939b"/><path d="M116.5 15.5 L130 0.5 H189.5 L177 15.5Z" fill="#e7eaee" stroke="#8d939b"/><path d="M56.5 15.5 L70 0.5 H130 L116.5 15.5Z" fill="#e7eaee" stroke="#8d939b"/><path d="M0.5 0 V15.5 H56.5 L70 0.5" fill="#fdfdfe" stroke="#8d939b"/><path d="M56.5 15.5h5l-3-3zM116.5 15.5h5l-3-3zM177 15.5h5l-3-3z" fill="#fff"/></svg>
<div class="t" style="left:76.5px;top:670px;font-size:12.8px;font-weight:bold;color:#3c4558">Sheet1</div>
<div class="t" style="left:138.5px;top:670px;font-size:12.3px;color:#4a5264">Sheet2</div>
<div class="t" style="left:199px;top:670px;font-size:12.3px;color:#4a5264">Sheet3</div>
<svg class="a" style="left:257px;top:669px" width="16" height="13"><path d="M3.5 4.5H14.5V11.5H5.5L3.5 9.5Z" fill="#eef2f8" stroke="#6b7f9e"/><path d="M4 1L4.8 3.2L7 3L5.3 4.5L6 7L4 5.6L2 7L2.7 4.5L1 3L3.2 3.2Z" fill="#f2b51c"/></svg>
<div class="a" style="left:718px;top:668px;width:6px;height:15px;background:#fff;border:1px solid #868c94"><div style="position:absolute;left:1.5px;top:3px;width:1px;height:7px;background:#9aa0a8"></div></div>
<svg class="a" style="left:728px;top:672px" width="7" height="9"><path d="M6 0V8.5L0.5 4.25Z" fill="#4b4f56"/></svg>
<div class="a" style="left:741px;top:667px;width:405px;height:15px;background:linear-gradient(#f3f5f8,#e1e5ea);border:1px solid #9aa0a8;border-radius:3px"></div>
<div class="a" style="left:939px;top:672px;width:1px;height:7px;background:#7d838b"></div>
<div class="a" style="left:941px;top:672px;width:1px;height:7px;background:#7d838b"></div>
<div class="a" style="left:943px;top:672px;width:1px;height:7px;background:#7d838b"></div>
<div class="a" style="left:945px;top:672px;width:1px;height:7px;background:#7d838b"></div>
<svg class="a" style="left:1176px;top:672px" width="7" height="9"><path d="M0.5 0V8.5L6 4.25Z" fill="#4b4f56"/></svg>
<div class="a" style="left:1188px;top:668px;width:6px;height:15px;background:#fff;border:1px solid #868c94"><div style="position:absolute;left:1.5px;top:3px;width:1px;height:7px;background:#9aa0a8"></div></div>
<div class="a" style="left:4px;top:684px;width:1206px;height:21px;background:linear-gradient(#eef0f3,#e3e6ea 45%,#d3d7dc)"></div>
<div class="t" style="left:12.5px;top:689px;font-size:11px;color:#3c4558">Ready</div>
<div class="a" style="left:52px;top:685px;width:1px;height:20px;background:#a9aeb5;border-right:1px solid #f5f6f8"></div>
<div class="a" style="left:953px;top:685px;width:1px;height:20px;background:#a9aeb5;border-right:1px solid #f5f6f8"></div>
<div class="a" style="left:958px;top:685px;width:19px;height:19px;background:linear-gradient(#fde9a0,#f9d36a);border:1px solid #c9a04a;border-radius:2px"></div>
<svg class="a" style="left:961px;top:688px" width="13" height="12"><rect x="0.5" y="0.5" width="12" height="11" fill="#fff" stroke="#4b4f56"/><path d="M0.5 4.5H12.5M0.5 7.5H12.5M4.5 0.5V11.5M8.5 0.5V11.5" stroke="#4b4f56"/></svg>
<svg class="a" style="left:979px;top:687px" width="15" height="15"><rect x="0.5" y="0.5" width="14" height="14" fill="#eef0f3" stroke="#5a5f66"/><rect x="3.5" y="2.5" width="8" height="10" fill="#fff" stroke="#5a5f66"/><path d="M5 5.5H10M5 7.5H10M5 9.5H10" stroke="#9aa0a8"/></svg>
<svg class="a" style="left:998px;top:687px" width="15" height="15"><rect x="0.5" y="0.5" width="14" height="14" fill="#c4c8ce" stroke="#5a5f66"/><rect x="2" y="2" width="4" height="7" fill="#fff"/><rect x="8" y="2" width="5" height="7" fill="#fff"/><path d="M7 1V14" stroke="#5a5f66"/></svg>
<div class="t" style="left:1023.5px;top:689px;font-size:11px;color:#3c4558">100%</div>
<div class="a" style="left:1075px;top:694px;width:100px;height:1px;background:#9aa0a8;border-bottom:1px solid #fff"></div>
<svg class="a" style="left:1058px;top:685px" width="18" height="18"><circle cx="9" cy="9" r="7.5" fill="#f7f8fa" stroke="#7d838b"/><path d="M5 9H13" stroke="#4b4f56" stroke-width="2"/></svg>
<svg class="a" style="left:1174px;top:685px" width="18" height="18"><circle cx="9" cy="9" r="7.5" fill="#f7f8fa" stroke="#7d838b"/><path d="M5 9H13M9 5V13" stroke="#4b4f56" stroke-width="2"/></svg>
<svg class="a" style="left:1120px;top:686px" width="11" height="16"><path d="M0.5 0.5H10.5V10.5L5.5 15L0.5 10.5Z" fill="#f5f6f8" stroke="#7d838b"/></svg>
<svg class="a" style="left:1197px;top:692px" width="12" height="13"><g fill="#a9b0b8"><rect x="8" y="1" width="2" height="2"/><rect x="5" y="4" width="2" height="2"/><rect x="8" y="4" width="2" height="2"/><rect x="2" y="7" width="2" height="2"/><rect x="5" y="7" width="2" height="2"/><rect x="8" y="7" width="2" height="2"/></g></svg>
<div class="a" style="left:0;top:51px;width:4px;height:658px;background:linear-gradient(90deg,#8f9399 0px,#8f9399 1px,#c9ccd1 1px,#d3d6da 3px,#9ca0a6 3px,#9ca0a6 4px)"></div>
<div class="a" style="left:1210px;top:51px;width:4px;height:658px;background:linear-gradient(90deg,#9ca0a6 0px,#9ca0a6 1px,#d3d6da 1px,#c9ccd1 3px,#8f9399 3px)"></div>
<div class="a" style="left:0;top:0;width:1px;height:51px;background:#8f9399"></div>
<div class="a" style="left:1213px;top:0;width:1px;height:51px;background:#8f9399"></div>
<div class="a" style="left:0;top:705px;width:1214px;height:4px;background:linear-gradient(#9ca0a6 0px,#9ca0a6 1px,#d3d6da 1px,#c9ccd1 3px,#8f9399 3px)"></div>
<div class="a" style="left:0;top:0;width:1214px;height:1px;background:#3c4046"></div>
<div class="a" style="left:1px;top:1px;width:1212px;height:1px;background:#f4f5f7"></div></body></html>
